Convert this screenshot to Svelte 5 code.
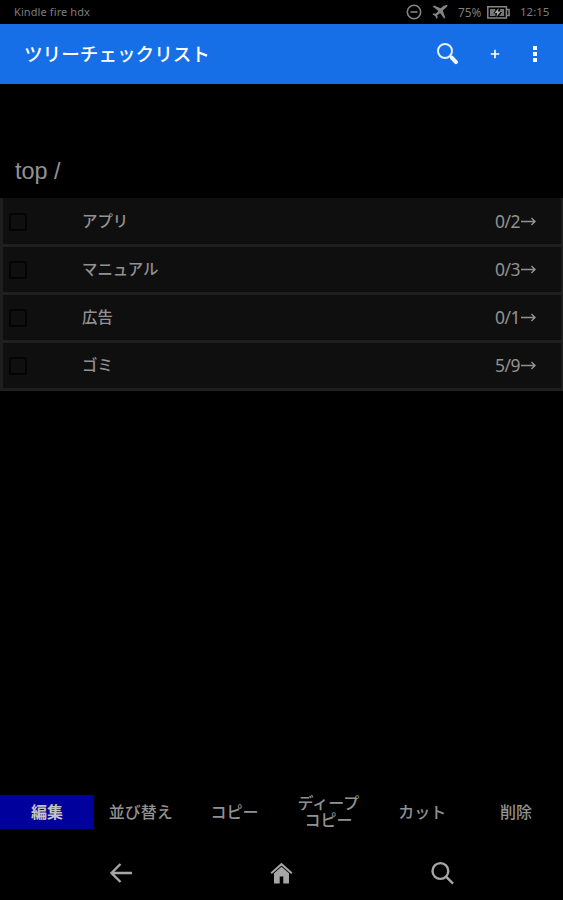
<script lang="ts">
  type Item = { name: string; count: string; checked: boolean };
  type Action = { id: string; lines: string[] };

  let items = $state<Item[]>([
    { name: 'アプリ', count: '0/2', checked: false },
    { name: 'マニュアル', count: '0/3', checked: false },
    { name: '広告', count: '0/1', checked: false },
    { name: 'ゴミ', count: '5/9', checked: false },
  ]);

  const actions: Action[] = [
    { id: 'edit', lines: ['編集'] },
    { id: 'sort', lines: ['並び替え'] },
    { id: 'copy', lines: ['コピー'] },
    { id: 'deep-copy', lines: ['ディープ', 'コピー'] },
    { id: 'cut', lines: ['カット'] },
    { id: 'delete', lines: ['削除'] },
  ];

  let active = $state('edit');
</script>

<div class="screen">
  <div class="status-bar">
    <span class="device">Kindle fire hdx</span>
    <svg class="dnd" width="16" height="16" viewBox="0 0 16 16">
      <circle cx="8" cy="8" r="6.7" />
      <path d="M4.5 8h7" />
    </svg>
    <svg class="plane" width="17" height="16" viewBox="0 0 17 16">
      <path d="M.8 2.4 2 1.4 8.6 4.2 12 1.8Q14.8.4 15.6 1.2 15.8 2.4 13.6 4L10.8 6.4 13.2 13.6 12.2 14.8 8.2 9 5.3 11.3 5.6 14 4.5 14.8 3.2 11.9.4 10.6 1.4 9.5 3.9 9.6 6.4 7z" />
    </svg>
    <span class="percent">75%</span>
    <svg class="battery" width="23" height="13" viewBox="0 0 23 13">
      <path class="shell" d="M.8.8h18.6v11.2H.8z" />
      <path class="shell" d="M20 3.4h2.1v6H20" />
      <path class="fill" d="M3 3h5.2v2L6 7.2h2.4V10H3zM13.2 3h3.9v7h-5l3-4h-2z" />
      <path class="bolt" d="M11.6 2 7.6 7h2.6l-.8 4 4.4-5.4H11z" />
    </svg>
    <span class="clock">12:15</span>
  </div>

  <header class="app-bar">
    <h1>ツリーチェックリスト</h1>
    <button class="find" aria-label="検索">
      <svg width="24" height="24" viewBox="0 0 24 24">
        <circle cx="9" cy="9" r="7" />
        <path class="neck" d="m14 14 2 2" />
        <path class="handle" d="m15.8 15.7 4.2 4.4" />
      </svg>
    </button>
    <button class="add" aria-label="追加">
      <svg width="10" height="10" viewBox="0 0 10 10">
        <path d="M5 .8v8.4M.8 5h8.4" />
      </svg>
    </button>
    <button class="more" aria-label="メニュー">
      <svg width="4" height="16" viewBox="0 0 4 16">
        <path d="M0 0h4v4H0zM0 6h4v4H0zM0 12h4v4H0z" />
      </svg>
    </button>
  </header>

  <main>
    <div class="path">top /</div>
    <ul class="list">
      {#each items as item}
        <li>
          <input type="checkbox" bind:checked={item.checked} aria-label={item.name} />
          <span class="name">{item.name}</span>
          <span class="count">{item.count}</span>
          <svg class="go" width="15" height="9" viewBox="0 0 15 9">
            <path d="M0 4.5h14M10.4 1l3.6 3.5L10.4 8" />
          </svg>
        </li>
      {/each}
    </ul>
  </main>

  <div class="actions">
    {#each actions as action}
      <button class:active={active === action.id} onclick={() => (active = action.id)}>
        {#each action.lines as line}
          <span>{line}</span>
        {/each}
      </button>
    {/each}
  </div>

  <nav class="nav-bar">
    <svg width="24" height="24" viewBox="0 0 24 24">
      <path class="line" d="M23 12H2.5M11.5 3 2.5 12l9 9" />
    </svg>
    <svg width="24" height="24" viewBox="0 0 24 24">
      <path class="line roof" d="M1.2 12.2 11.5 3.2l10.3 9" />
      <path class="solid" d="M11.5 5.8 4 12.3V22.4h5.7v-6.8h3.6v6.8H19V12.3z" />
    </svg>
    <svg width="24" height="24" viewBox="0 0 24 24">
      <circle class="line" cx="9.4" cy="10" r="7.9" />
      <path class="line" d="m15 15.7 7 7" />
    </svg>
  </nav>
</div>

<style>
  :global(body) {
    background: #000;
  }

  .screen {
    display: flex;
    flex-direction: column;
    width: 563px;
    height: 900px;
    overflow: hidden;
    background: #000;
    color: #929292;
    font-family: "Noto Sans", "Noto Sans CJK JP", sans-serif;
  }

  button {
    padding: 0;
    border: 0;
    background: none;
    color: inherit;
    font: inherit;
  }

  svg {
    display: block;
    flex: none;
    fill: none;
  }

  /* Status bar */
  .status-bar {
    display: flex;
    align-items: center;
    box-sizing: border-box;
    height: 24px;
    padding: 0 14px;
    color: #7d7d7d;
    font-size: 11.8px;
    line-height: 24px;
  }

  .device {
    flex: 1;
    font-size: 11px;
    letter-spacing: 0.1px;
  }

  .dnd {
    margin-right: 10px;
    stroke: #848484;
    stroke-width: 1.6;
  }

  .plane {
    margin-right: 9px;
    fill: #848484;
  }

  .percent {
    width: 29px;
  }

  .battery {
    margin-right: 10px;
  }

  .shell {
    stroke: #858585;
    stroke-width: 1.5;
  }

  .fill {
    fill: #777;
  }

  .bolt {
    fill: #aaa;
  }

  .clock {
    width: 29px;
    font-size: 11.5px;
    white-space: nowrap;
  }

  /* App bar */
  .app-bar {
    display: flex;
    align-items: center;
    box-sizing: border-box;
    height: 60px;
    padding: 0 26px 0 24px;
    background: #176fe8;
    color: #fff;
  }

  h1 {
    flex: 1;
    margin: 0;
    font-size: 18.6px;
    font-weight: 500;
    line-height: 60px;
  }

  .find {
    margin-right: 30px;
    stroke: #e4efff;
    stroke-width: 2;
  }

  .find .handle {
    stroke: #f2f7ff;
    stroke-width: 4;
    stroke-linecap: round;
  }

  .add {
    margin-right: 33px;
    stroke: #fff;
    stroke-width: 1.6;
  }

  .more svg {
    fill: #fff;
  }

  /* Checklist */
  main {
    flex: 1;
    padding-top: 74px;
  }

  .path {
    height: 40px;
    padding-left: 15px;
    font-family: "Liberation Sans", Arial, sans-serif;
    font-size: 23.4px;
    line-height: 27px;
  }

  .list {
    margin: 0;
    padding: 1px 2px 0 3px;
    background: #1f1f1f;
    list-style: none;
  }

  .list li {
    display: flex;
    align-items: center;
    height: 45px;
    padding: 0 25px 0 6px;
    border-bottom: 3px solid #1f1f1f;
    background: #0f0f0f;
  }

  .list li:first-child {
    margin-top: -1px;
    padding-top: 1px;
  }

  input {
    appearance: none;
    box-sizing: border-box;
    width: 18px;
    height: 18px;
    margin: 0 55px 0 0;
    border: 2px solid #040404;
    border-radius: 3px;
  }

  .name {
    flex: 1;
    font-size: 15.4px;
    font-weight: 500;
    line-height: 45px;
  }

  .count {
    margin-right: 1px;
    font-size: 17.5px;
    letter-spacing: -0.5px;
    line-height: 45px;
  }

  .go {
    stroke: #929292;
    stroke-width: 1.4;
  }

  /* Bottom actions */
  .actions {
    display: flex;
    height: 34px;
    margin-bottom: 16px;
  }

  .actions button {
    display: flex;
    flex: 1 1 0;
    flex-direction: column;
    align-items: center;
    justify-content: center;
    font-size: 16px;
    font-weight: 500;
    line-height: 17px;
    white-space: nowrap;
  }

  .actions .active {
    background: #00009c;
    color: #c4c4c4;
    font-weight: 700;
  }

  /* System navigation */
  .nav-bar {
    display: flex;
    justify-content: space-between;
    box-sizing: border-box;
    height: 55px;
    padding: 16px 108px 0 109px;
  }

  .line {
    stroke: #a6a6a6;
    stroke-width: 2.4;
  }

  .roof {
    stroke-width: 2;
  }

  .solid {
    fill: #a6a6a6;
  }
</style>
